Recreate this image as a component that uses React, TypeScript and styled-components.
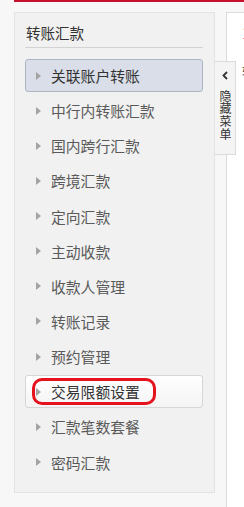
import React from "react";
import styled, { createGlobalStyle, css } from "styled-components";

const Global = createGlobalStyle`
  html, body { margin: 0; padding: 0; background: #f7f7f7; overflow: hidden; }
  body { font-family: "Noto Sans CJK SC", "Noto Sans", sans-serif; }
`;

const Page = styled.div`
  position: relative;
  width: 244px;
  height: 507px;
  overflow: hidden;
`;

const TopBar = styled.div`
  margin-left: 14px;
  height: 2px;
  background: #c5102f;
`;

const Layout = styled.div`
  display: flex;
  align-items: flex-start;
  padding: 10px 0 0 14px;
  gap: 11px;
`;

const Panel = styled.aside`
  flex: 0 0 auto;
  width: 201px;
  box-sizing: border-box;
  border: 1px solid #e3e3e3;
  background: #f1f1f1;
  padding: 0 11px 13px 10px;
`;

const Title = styled.div`
  font-size: 14.5px;
  line-height: 20px;
  color: #333;
  padding: 10px 0 4px 1px;
  border-bottom: 1px solid #d3d3d3;
`;

const List = styled.ul`
  list-style: none;
  margin: 11px 0 0;
  padding: 0;
  display: flex;
  flex-direction: column;
  gap: 2.15px;
`;

type Variant = "active" | "box" | "plain";

const Item = styled.li<{ $variant: Variant }>`
  position: relative;
  height: 33px;
  box-sizing: border-box;
  display: flex;
  align-items: center;
  gap: 10px;
  padding-left: 10px;
  border: 1px solid transparent;
  border-radius: 3px;
  font-size: 14.8px;
  color: #5a5a5a;
  ${(p) =>
    p.$variant === "active" &&
    css`
      background: #d9dee9;
      border-color: #adb5c5;
      color: #333;
    `}
  ${(p) =>
    p.$variant === "box" &&
    css`
      background: linear-gradient(#ffffff, #f4f4f4);
      border-color: #d6d6d6;
      color: #333;
    `}
`;

const Arrow = styled.span`
  width: 0;
  height: 0;
  border-top: 4.5px solid transparent;
  border-bottom: 4.5px solid transparent;
  border-left: 5px solid #a3a3a3;
`;

const Highlight = styled.span`
  position: absolute;
  left: 6px;
  top: 2px;
  width: 124px;
  height: 27px;
  box-sizing: border-box;
  border: 3.5px solid #e5131d;
  border-radius: 10px;
  pointer-events: none;
`;

const Main = styled.main`
  flex: 0 0 auto;
  width: 500px;
  height: 520px;
  box-sizing: border-box;
  border: 1px solid #dcdcdc;
  border-bottom: none;
  background: #fff;
  padding: 10px 0 0 15px;
`;

const MainTitle = styled.div`
  font-size: 14px;
  line-height: 20px;
  color: #e06a86;
`;

const MainText = styled.div`
  margin-top: 18px;
  font-size: 13px;
  line-height: 20px;
  color: #555;
`;

const Tab = styled.div`
  position: absolute;
  left: 215px;
  top: 61px;
  width: 21px;
  height: 94px;
  box-sizing: border-box;
  background: #f4f4f4;
  border: 1px solid #dcdcdc;
  border-left: none;
  display: flex;
  flex-direction: column;
  align-items: center;
  padding-top: 9px;
  color: #333;
`;

const TabLabel = styled.span`
  writing-mode: vertical-rl;
  font-size: 12px;
  line-height: 14px;
  letter-spacing: 0.7px;
`;

const Chevron = styled.svg`
  width: 8px;
  height: 9px;
  margin-bottom: 10px;
`;

const items: { label: string; variant: Variant; mark?: boolean }[] = [
  { label: "关联账户转账", variant: "active" },
  { label: "中行内转账汇款", variant: "plain" },
  { label: "国内跨行汇款", variant: "plain" },
  { label: "跨境汇款", variant: "plain" },
  { label: "定向汇款", variant: "plain" },
  { label: "主动收款", variant: "plain" },
  { label: "收款人管理", variant: "plain" },
  { label: "转账记录", variant: "plain" },
  { label: "预约管理", variant: "plain" },
  { label: "交易限额设置", variant: "box", mark: true },
  { label: "汇款笔数套餐", variant: "plain" },
  { label: "密码汇款", variant: "plain" },
];

export default function App() {
  return (
    <>
      <Global />
      <Page>
        <TopBar />
        <Layout>
          <Panel>
            <Title>转账汇款</Title>
            <List>
              {items.map((it) => (
                <Item key={it.label} $variant={it.variant}>
                  <Arrow />
                  <span>{it.label}</span>
                  {it.mark && <Highlight />}
                </Item>
              ))}
            </List>
          </Panel>
          <Main>
            <MainTitle>1 转账汇款</MainTitle>
            <MainText>转账汇款说明</MainText>
          </Main>
        </Layout>
        <Tab>
          <Chevron viewBox="0 0 8 9">
            <path d="M6 1 L2.5 4.5 L6 8" fill="none" stroke="#333" strokeWidth="1.8" />
          </Chevron>
          <TabLabel>隐藏菜单</TabLabel>
        </Tab>
      </Page>
    </>
  );
}
